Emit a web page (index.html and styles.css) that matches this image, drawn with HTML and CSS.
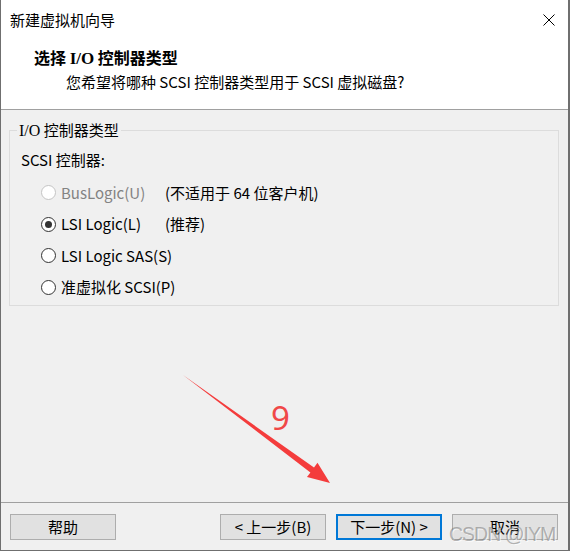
FILE: index.html
```html
<!DOCTYPE html>
<html lang="zh-CN">
<head>
<meta charset="utf-8">
<title>新建虚拟机向导</title>
<link rel="stylesheet" href="styles.css">
</head>
<body>
<div class="window">
  <div class="titlebar">
    <span class="title">新建虚拟机向导</span>
    <svg class="close" width="12" height="12" viewBox="0 0 12 12"><path d="M0.5 0.5 L11.5 11.5 M11.5 0.5 L0.5 11.5" stroke="#000" stroke-width="1" fill="none"/></svg>
  </div>
  <div class="header">
    <div class="heading">选择 <span class="serif">I/O</span> 控制器类型</div>
    <div class="subtitle">您希望将哪种 SCSI 控制器类型用于 SCSI 虚拟磁盘?</div>
  </div>
  <div class="content">
    <fieldset class="group">
      <legend class="group-title"><span class="serif-light">I/O</span> 控制器类型</legend>
      <div class="group-label">SCSI 控制器:</div>
      <div class="options">
        <div class="option disabled"><span class="radio"></span><span class="opt-label">BusLogic(U)</span><span class="note">(不适用于 64 位客户机)</span></div>
        <div class="option"><span class="radio checked"></span><span class="opt-label">LSI Logic(L)</span><span class="note">(推荐)</span></div>
        <div class="option"><span class="radio"></span><span class="opt-label">LSI Logic SAS(S)</span><span class="note"></span></div>
        <div class="option"><span class="radio"></span><span class="opt-label">准虚拟化 SCSI(P)</span><span class="note"></span></div>
      </div>
    </fieldset>
    <svg class="annot-arrow" width="180" height="130" viewBox="0 0 180 130"><polygon points="13,15 144,107.6 147.5,102.7 160,123 137,117 140.4,112.4" fill="#f43c3c"/></svg>
    <span class="annot-num">9</span>
  </div>
  <div class="footer">
    <button class="btn">帮助</button>
    <div class="nav">
      <button class="btn">&lt; 上一步(B)</button>
      <button class="btn default">下一步(N) &gt;</button>
      <button class="btn">取消</button>
    </div>
  </div>
  <span class="watermark">CSDN @IYM</span>
</div>
</body>
</html>
```
FILE: styles.css
```css
* { box-sizing: border-box; }
html, body { margin: 0; padding: 0; }
body {
  width: 570px;
  height: 551px;
  background: #fff;
  font-family: "Noto Sans CJK SC", "Noto Sans", sans-serif;
  font-size: 15px;
  line-height: 20px;
  color: #000;
}
.window {
  position: relative;
  width: 570px;
  height: 551px;
  display: flex;
  flex-direction: column;
  border-left: 1px solid #6f6f6f;
  border-right: 2px solid #6f6f6f;
  border-bottom: 1px solid #6f6f6f;
  background: #f0f0f0;
  overflow: hidden;
}
.titlebar {
  height: 38px;
  flex: none;
  background: #fff;
  display: flex;
  align-items: center;
  justify-content: space-between;
  padding: 1px 13px 0 9px;
}
.title { line-height: 20px; }
.close { display: block; }
.header {
  height: 72px;
  flex: none;
  background: #fff;
  border-bottom: 1px solid #a0a0a0;
  padding-top: 9px;
}
.heading {
  padding-left: 33px;
  font-weight: 700;
  font-size: 16px;
  line-height: 20px;
}
.serif { font-family: "Liberation Serif", serif; font-weight: 700; font-size: 17px; }
.serif-light { font-family: "Liberation Serif", serif; font-size: 16px; }
.subtitle {
  padding-left: 65px;
  margin-top: 3px;
}
.content {
  position: relative;
  flex: 1;
  padding: 10px 9px 0 8px;
}
.group {
  margin: 0;
  padding: 0 0 2px 11px;
  border: 1px solid #dcdcdc;
  min-width: 0;
}
.group-title {
  padding: 0 2px;
  margin-left: -4px;
}
.group-label { margin-top: 9px; }
.options {
  display: grid;
  grid-template-columns: 20px 104px auto;
  grid-auto-rows: 31.5px;
  align-items: center;
  margin-top: 7px;
  padding-left: 20px;
}
.option { display: contents; }
.opt-label, .note { white-space: nowrap; }
.radio {
  display: block;
  width: 15px;
  height: 15px;
  min-width: 15px;
  justify-self: start;
  border: 1px solid #333;
  border-radius: 50%;
  background: #fff;
  position: relative;
}
.radio.checked::after {
  content: "";
  position: absolute;
  left: 3px;
  top: 3px;
  width: 7px;
  height: 7px;
  border-radius: 50%;
  background: #333;
}
.disabled .opt-label { color: #838383; }
.disabled .radio { border-color: #c4c4c4; }
.annot-arrow {
  position: absolute;
  left: 169px;
  top: 250px;
}
.annot-num {
  position: absolute;
  left: 270px;
  top: 291px;
  font-family: "Noto Sans", sans-serif;
  font-size: 33px;
  line-height: 33px;
  color: #f04848;
}
.footer {
  height: 48px;
  flex: none;
  border-top: 1px solid #a0a0a0;
  display: flex;
  align-items: flex-start;
  padding: 11px 10px 0 9px;
}
.nav {
  margin-left: auto;
  display: flex;
  gap: 10px;
}
.btn {
  width: 106px;
  height: 26px;
  margin: 0;
  padding: 0;
  border: 1px solid #adadad;
  background: #e1e1e1;
  font-family: "Noto Sans CJK SC", "Noto Sans", sans-serif;
  font-size: 15px;
  line-height: 20px;
  color: #000;
}
.btn.default { border: 2px solid #0078d7; }
.watermark {
  position: absolute;
  left: 448px;
  top: 524px;
  font-family: "Liberation Sans", sans-serif;
  font-size: 19.5px;
  line-height: 20px;
  letter-spacing: -1px;
  color: rgba(120, 120, 120, 0.55);
  text-shadow: 1px 1px 0 rgba(255, 255, 255, 0.7);
  white-space: nowrap;
}
```
